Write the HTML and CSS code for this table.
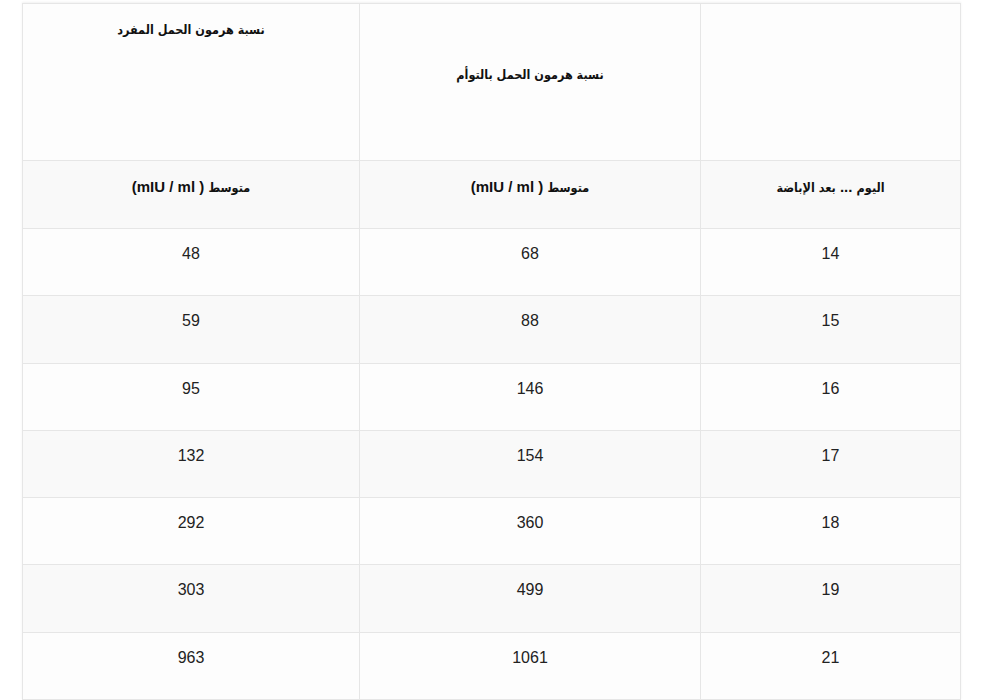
FILE: index.html
```html
<!DOCTYPE html>
<html lang="ar">
<head>
<meta charset="utf-8">
<title>نسبة هرمون الحمل</title>
<link rel="stylesheet" href="styles.css">
</head>
<body>
<div class="wrap">
<table class="hcg" dir="rtl">
  <colgroup>
    <col class="c-day">
    <col class="c-twin">
    <col class="c-single">
  </colgroup>
  <tbody>
    <tr class="head1">
      <td></td>
      <td class="twin-title"><span class="ar">نسبة هرمون الحمل بالتوأم</span></td>
      <td class="single-title"><span class="ar">نسبة هرمون الحمل المفرد</span></td>
    </tr>
    <tr class="head2">
      <td><span class="ar">اليوم</span> ... <span class="ar">بعد الإباضة</span></td>
      <td><span class="ar">متوسط</span> ( mIU / ml)</td>
      <td><span class="ar">متوسط</span> ( mIU / ml)</td>
    </tr>
    <tr class="row odd"><td>14</td><td>68</td><td>48</td></tr>
    <tr class="row even"><td>15</td><td>88</td><td>59</td></tr>
    <tr class="row odd"><td>16</td><td>146</td><td>95</td></tr>
    <tr class="row even"><td>17</td><td>154</td><td>132</td></tr>
    <tr class="row odd"><td>18</td><td>360</td><td>292</td></tr>
    <tr class="row even"><td>19</td><td>499</td><td>303</td></tr>
    <tr class="row odd"><td>21</td><td>1061</td><td>963</td></tr>
  </tbody>
</table>
</div>
</body>
</html>
```

FILE: styles.css
```css
html, body {
  margin: 0;
  padding: 0;
  background: #ffffff;
}

body {
  font-family: "Liberation Sans", "DejaVu Sans", Arial, sans-serif;
  color: #222222;
}

.wrap {
  padding: 3px 0 0 22px;
}

.hcg {
  width: 938px;
  border-collapse: collapse;
  table-layout: fixed;
  border: 1px solid #e6e6e6;
  box-shadow: 0 -1px 2px rgba(0, 0, 0, 0.06);
}

.c-day { width: 260px; }
.c-twin { width: 341px; }
.c-single { width: 337px; }

.hcg td {
  border: 1px solid #e6e6e6;
  text-align: center;
  vertical-align: top;
  padding: 0 10px;
}

.ar {
  font-family: "DejaVu Sans Condensed", "DejaVu Sans", sans-serif;
  font-size: 12.5px;
}

.head1 {
  height: 157px;
  background: #fdfdfd;
}

.head1 td {
  font-weight: bold;
  font-size: 15px;
  line-height: 20px;
  color: #111111;
}

.head1 .single-title {
  padding-top: 15px;
}

.head1 .twin-title {
  padding-top: 60px;
}

.head2 {
  height: 68px;
  background: #f9f9f9;
}

.head2 td {
  font-weight: bold;
  font-size: 15px;
  line-height: 20px;
  color: #111111;
  padding-top: 16px;
}

.row {
  height: 67.3px;
}

.row td {
  font-size: 16px;
  line-height: 24px;
  padding-top: 13px;
}

.row.odd { background: #fdfdfd; }
.row.even { background: #f9f9f9; }
```
